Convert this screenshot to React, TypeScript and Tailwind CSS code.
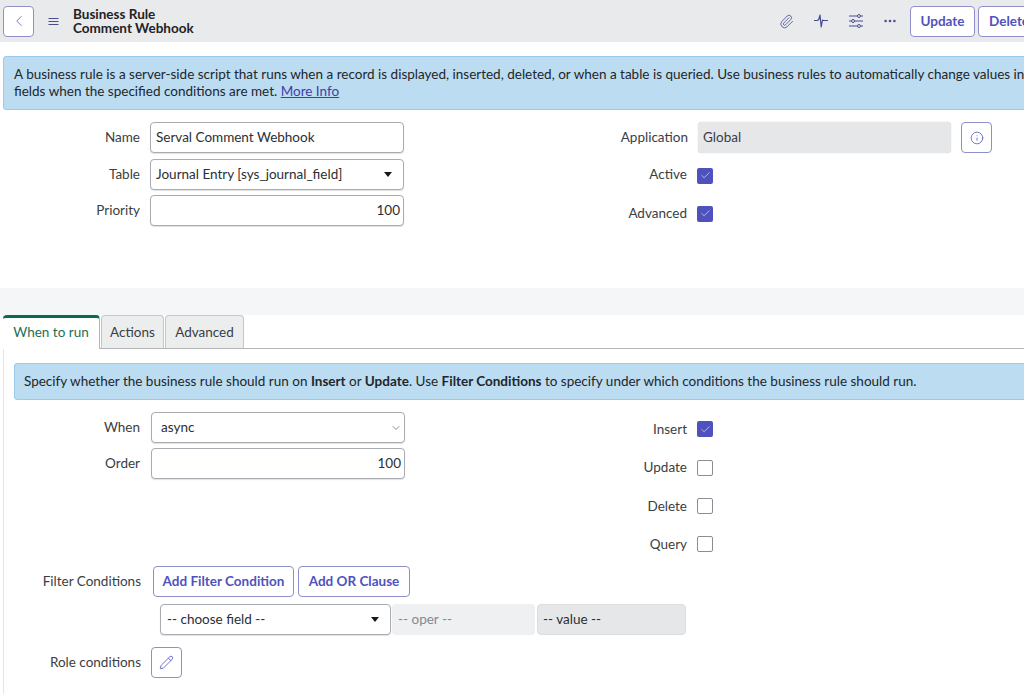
import React from "react";
import { ChevronLeft, Paperclip, Info, Pencil, Check, ChevronDown } from "lucide-react";

const inputBase = "h-[31px] rounded-[4px] border border-[#a9abb0] bg-white shadow-[0_1px_1px_rgba(0,0,0,0.12)] text-[13.5px] text-[#2b2f33] flex items-center";
const labelText = "text-right text-[13.5px] text-[#3a3e43]";

function Caret() {
  return <span className="ml-auto w-0 h-0 border-l-[4.5px] border-r-[4.5px] border-t-[5px] border-l-transparent border-r-transparent border-t-[#17191c]" />;
}

function Box({ checked }: { checked?: boolean }) {
  return checked ? (
    <span className="w-[16px] h-[16px] rounded-[2px] bg-[#4f52bd] flex items-center justify-center shrink-0">
      <Check size={11} strokeWidth={1.5} color="#dfe0f5" />
    </span>
  ) : (
    <span className="w-[16px] h-[16px] rounded-[2px] border border-[#8a8d93] bg-white shrink-0" />
  );
}

function Row({ label, children, className = "" }: { label: string; children: React.ReactNode; className?: string }) {
  return (
    <div className={"flex items-center " + className}>
      <span className={"w-[140px] mr-[10px] " + labelText}>{label}</span>
      {children}
    </div>
  );
}

function HamburgerIcon() {
  return (
    <svg width="13" height="13" viewBox="0 0 13 13" fill="none" stroke="#4a4d8f" strokeWidth="1.2" className="ml-[13px] shrink-0">
      <path d="M1.5 3.5h10M1.5 6.5h10M1.5 9.5h10" />
    </svg>
  );
}

function PulseIcon() {
  return (
    <svg width="16" height="16" viewBox="0 0 16 16" fill="none" stroke="#4a4d8f" strokeWidth="1.2" strokeLinejoin="round" className="mr-[19px] shrink-0">
      <path d="M1 7.5h3.5l1.2 -1 1.3 -4.5 1.2 12 1.3 -7 1 0.5H15" />
    </svg>
  );
}

function SlidersIcon() {
  return (
    <svg width="16" height="16" viewBox="0 0 16 16" fill="none" stroke="#4a4d8f" strokeWidth="1" className="mr-[20px] shrink-0">
      <path d="M1 3h8.5M12.5 3H15M1 8h2.5M6.5 8H15M1 13h8.5M12.5 13H15" />
      <circle cx="11" cy="3" r="1.5" />
      <circle cx="5" cy="8" r="1.5" />
      <circle cx="11" cy="13" r="1.5" />
    </svg>
  );
}

function DotsIcon() {
  return (
    <svg width="12" height="4" viewBox="0 0 12 4" fill="#4a4d8f" className="mr-[14px] shrink-0">
      <circle cx="1.6" cy="2" r="1.3" />
      <circle cx="6" cy="2" r="1.3" />
      <circle cx="10.4" cy="2" r="1.3" />
    </svg>
  );
}

const outlineBtn = "rounded-[4px] border border-[#8f90c9] bg-white flex items-center justify-center text-[#4f52bd] font-bold text-[13.5px] shrink-0";

const checks: { label: string; checked: boolean }[] = [
  { label: "Insert", checked: true },
  { label: "Update", checked: false },
  { label: "Delete", checked: false },
  { label: "Query", checked: false },
];

export default function App() {
  return (
    <div className="w-[1024px] h-[694px] overflow-hidden bg-white text-[#2b2f33]" style={{ fontFamily: "Lato, 'Open Sans', sans-serif" }}>
      <header className="h-[42px] bg-[#e9eaec] flex items-center pl-[3px]">
        <button className={outlineBtn + " w-[31px] h-[31px]"}>
          <ChevronLeft size={18} strokeWidth={1} color="#4f52bd" />
        </button>
        <HamburgerIcon />
        <div className="ml-[13px] text-[13.5px] leading-[14px] font-bold text-[#1f2226]">
          <div>Business Rule</div>
          <div>Comment Webhook</div>
        </div>
        <div className="ml-auto flex items-center shrink-0 -mr-[19px]">
          <Paperclip size={15} strokeWidth={1.3} color="#4a4d8f" className="mr-[19px]" />
          <PulseIcon />
          <SlidersIcon />
          <DotsIcon />
          <button className={outlineBtn + " w-[65px] h-[31px]"}>Update</button>
          <button className={outlineBtn + " w-[65px] h-[31px] ml-[3px] justify-start pl-[10px]"}>Delete</button>
        </div>
      </header>

      <div className="mt-[14px] ml-[3px] w-[1040px] h-[54px] rounded-[3px] border border-[#9ccaea] bg-[#bcdcf2] pl-[10px] pt-[9px] text-[13.5px] leading-[17px] text-[#22262a]">
        <div className="whitespace-nowrap">A business rule is a server-side script that runs when a record is displayed, inserted, deleted, or when a table is queried. Use business rules to automatically change values in</div>
        <div>fields when the specified conditions are met. <a className="underline text-[#3c40a8]">More Info</a></div>
      </div>

      <section className="mt-[12px] h-[166px] flex">
        <div className="flex flex-col">
          <Row label="Name">
            <div className={inputBase + " w-[254px] px-[5px]"}>Serval Comment Webhook</div>
          </Row>
          <Row label="Table" className="mt-[6px]">
            <div className={inputBase + " w-[254px] pl-[5px] pr-[11px]"}>Journal Entry [sys_journal_field]<Caret /></div>
          </Row>
          <Row label="Priority" className="mt-[5px]">
            <div className={inputBase + " w-[254px] px-[3px] justify-end"}>100</div>
          </Row>
        </div>
        <div className="ml-[216px] flex flex-col">
          <div className="flex items-center h-[31px]">
            <span className={"w-[68px] mr-[10px] " + labelText}>Application</span>
            <div className="w-[253px] h-[31px] rounded-[4px] bg-[#e6e7e9] flex items-center px-[5px] text-[13.5px] text-[#3a3e43] shadow-[0_0_1px_rgba(0,0,0,0.3)]">Global</div>
            <button className={outlineBtn + " w-[31px] h-[31px] ml-[10px]"}>
              <Info size={14} strokeWidth={1.3} color="#4f52bd" />
            </button>
          </div>
          <div className="flex items-center h-[37px] mt-[4px]">
            <span className={"w-[67px] mr-[10px] -mt-[2px] " + labelText}>Active</span>
            <Box checked />
          </div>
          <div className="flex items-center h-[37px] mt-[1px]">
            <span className={"w-[67px] mr-[10px] -mt-[1px] " + labelText}>Advanced</span>
            <Box checked />
          </div>
        </div>
      </section>

      <div className="h-[27px] bg-[#f5f6f8]" />

      <section className="ml-[3px] border-l border-[#e4e5e8] h-[379px]">
        <div className="flex items-end h-[34px] border-b border-[#b4b6ba]">
          <div className="-ml-[1px] w-[97px] h-[34px] rounded-t-[4px] border-t-[3px] border-t-[#0b6b4f] border-r border-r-[#b4b6ba] bg-white -mb-[1px] flex items-center justify-center text-[13.5px] text-[#1c6f57] pb-[3px]">When to run</div>
          <div className="ml-[1px] w-[63px] h-[33px] rounded-t-[4px] border border-b-0 border-[#c4c6ca] bg-[#eceded] flex items-center justify-center text-[13.5px] text-[#3a3e43]">Actions</div>
          <div className="ml-[1px] w-[79px] h-[33px] rounded-t-[4px] border border-b-0 border-[#c4c6ca] bg-[#eceded] flex items-center justify-center text-[13.5px] text-[#3a3e43]">Advanced</div>
        </div>

        <div className="mt-[14px] ml-[10px] w-[1030px] h-[37px] rounded-[3px] border border-[#9ccaea] bg-[#bcdcf2] pl-[9px] flex items-center text-[13.5px] text-[#22262a] whitespace-nowrap">
          <span>Specify whether the business rule should run on <b>Insert</b> or <b>Update</b>. Use <b>Filter Conditions</b> to specify under which conditions the business rule should run.</span>
        </div>

        <div className="flex mt-[12px] -ml-[4px] h-[154px]">
          <div className="flex flex-col gap-[5px] w-[405px]">
            <Row label="When">
              <div className={inputBase + " w-[254px] ml-[1px] pl-[9px] pr-[2px]"}>async<ChevronDown size={12} strokeWidth={1.2} color="#3a3e43" className="ml-auto" /></div>
            </Row>
            <Row label="Order">
              <div className={inputBase + " w-[254px] ml-[1px] px-[3px] justify-end"}>100</div>
            </Row>
          </div>
          <div className="flex flex-col -mt-[2px]">
            {checks.map((c) => (
              <div key={c.label} className="flex items-center h-[38.4px]">
                <span className={"w-[282px] mr-[10px] " + labelText}>{c.label}</span>
                <Box checked={c.checked} />
              </div>
            ))}
          </div>
        </div>

        <div className="-ml-[4px] flex items-center">
          <span className={"w-[141px] " + labelText}>Filter Conditions</span>
          <button className={outlineBtn + " ml-[12px] w-[141px] h-[31px]"}>Add Filter Condition</button>
          <button className={outlineBtn + " ml-[4px] w-[112px] h-[31px]"}>Add OR Clause</button>
        </div>

        <div className="-ml-[4px] mt-[7px] flex items-center pl-[160px]">
          <div className={inputBase + " w-[231px] pl-[6px] pr-[11px]"}>-- choose field --<Caret /></div>
          <div className="ml-[1px] w-[143px] h-[31px] rounded-[4px] bg-[#eff0f1] flex items-center pl-[6px] text-[13.5px] text-[#85888d]">-- oper --</div>
          <div className="ml-[2px] w-[149px] h-[31px] rounded-[4px] bg-[#e6e7e9] border border-[#dcdde0] flex items-center pl-[5px] text-[13.5px] text-[#2b2f33]">-- value --</div>
        </div>

        <div className="-ml-[4px] mt-[12px] flex items-center">
          <span className={"w-[141px] " + labelText}>Role conditions</span>
          <button className={outlineBtn + " ml-[10px] w-[31px] h-[31px]"}>
            <Pencil size={15} strokeWidth={1.3} color="#4f52bd" />
          </button>
        </div>
      </section>
    </div>
  );
}
